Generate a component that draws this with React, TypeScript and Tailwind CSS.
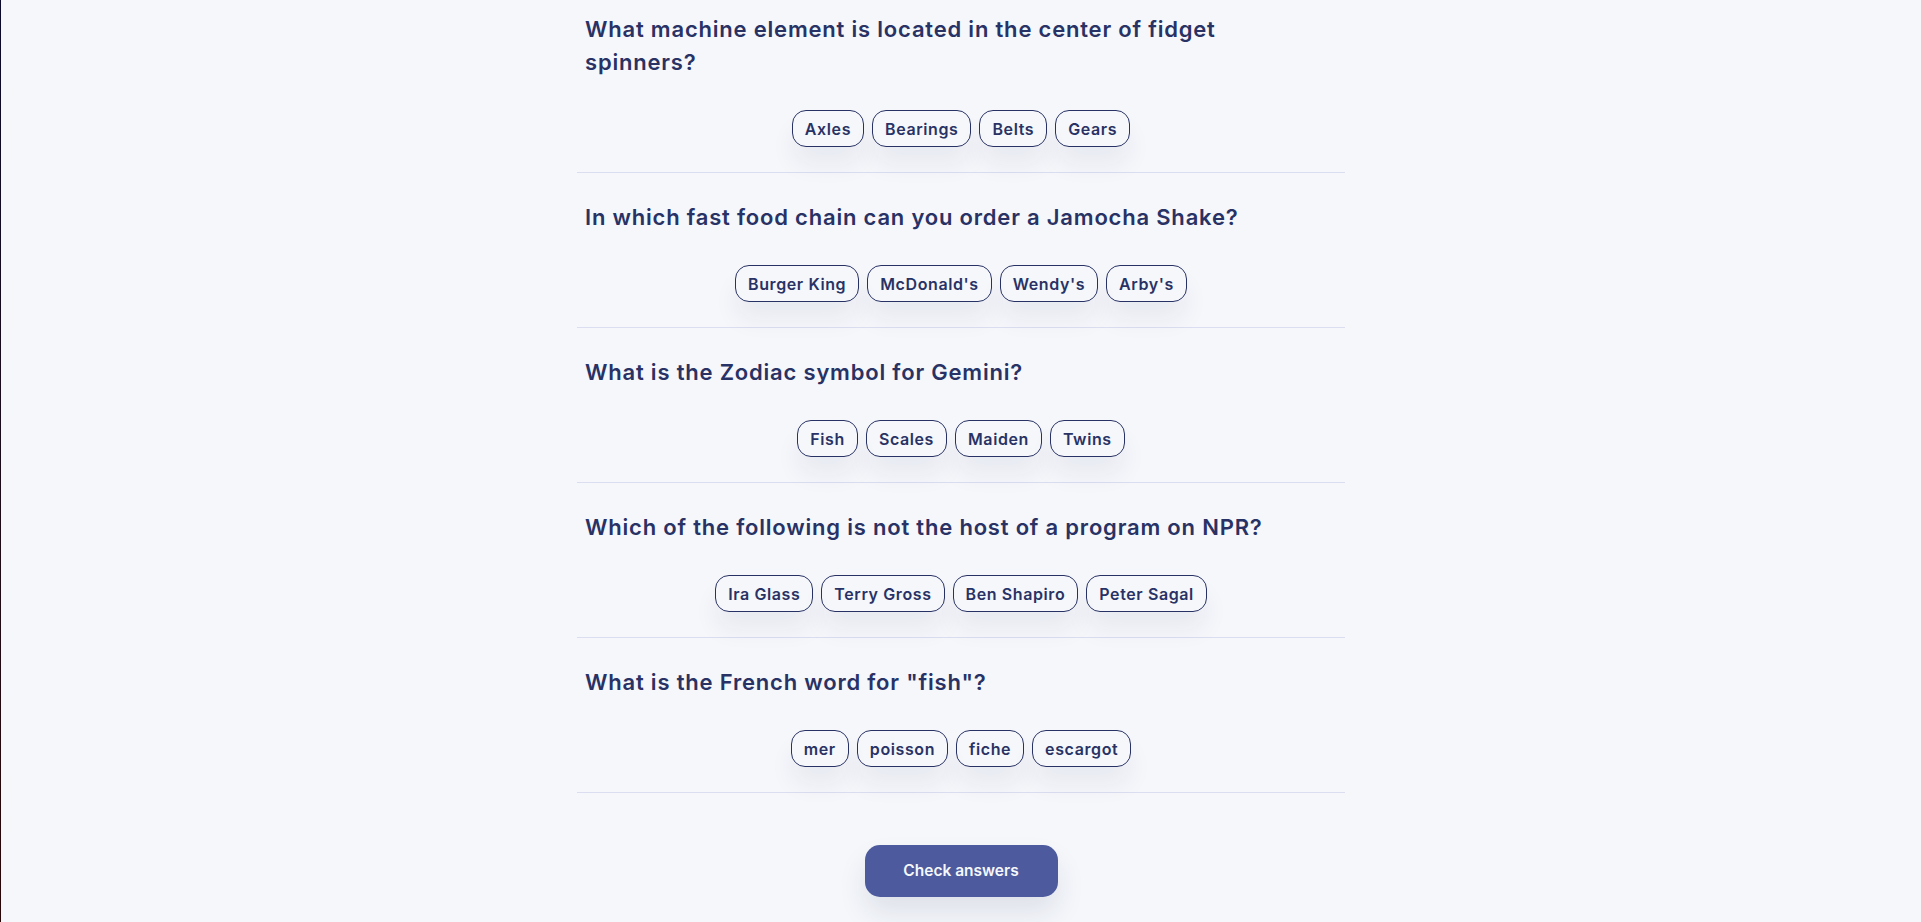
const questions = [
  {
    question: 'What machine element is located in the center of fidget spinners?',
    answers: ['Axles', 'Bearings', 'Belts', 'Gears'],
  },
  {
    question: 'In which fast food chain can you order a Jamocha Shake?',
    answers: ['Burger King', "McDonald's", "Wendy's", "Arby's"],
  },
  {
    question: 'What is the Zodiac symbol for Gemini?',
    answers: ['Fish', 'Scales', 'Maiden', 'Twins'],
  },
  {
    question: 'Which of the following is not the host of a program on NPR?',
    answers: ['Ira Glass', 'Terry Gross', 'Ben Shapiro', 'Peter Sagal'],
  },
  {
    question: 'What is the French word for "fish"?',
    answers: ['mer', 'poisson', 'fiche', 'escargot'],
  },
];

function Question({ question, answers }: { question: string; answers: string[] }) {
  return (
    <div className="border-b border-[#dbdef0] pt-[28px] pb-[25px]">
      <h2 className="max-w-[724px] pl-2 text-[22px] leading-[33px] font-semibold tracking-[0.8px] text-[#293264]">
        {question}
      </h2>
      <div className="mt-[31px] flex justify-center gap-2">
        {answers.map((a) => (
          <button
            key={a}
            className="h-[37px] rounded-[14px] border border-[#293264] px-[12px] text-[16px] font-semibold tracking-[0.6px] text-[#293264] shadow-[0_18px_24px_rgba(30,40,80,0.06)]"
          >
            {a}
          </button>
        ))}
      </div>
    </div>
  );
}

export default function App() {
  return (
    <div className="flex min-h-screen bg-[#f5f7fb] font-['Inter',sans-serif]">
      <div className="w-px shrink-0 bg-linear-to-b from-[#0b0a2a] to-[#2a0606]" />
      <main className="flex-1 overflow-hidden">
        <div className="mx-auto -mt-[15px] w-[768px]">
          {questions.map((q) => (
            <Question key={q.question} {...q} />
          ))}
          <div className="flex justify-center pt-[52px] pb-10">
            <button className="h-[52px] w-[193px] rounded-[15px] bg-[#4d5b9e] text-[15.5px] font-semibold text-[#f5f7fb] shadow-[0_16px_28px_rgba(30,40,80,0.1)]">
              Check answers
            </button>
          </div>
        </div>
      </main>
    </div>
  );
}
